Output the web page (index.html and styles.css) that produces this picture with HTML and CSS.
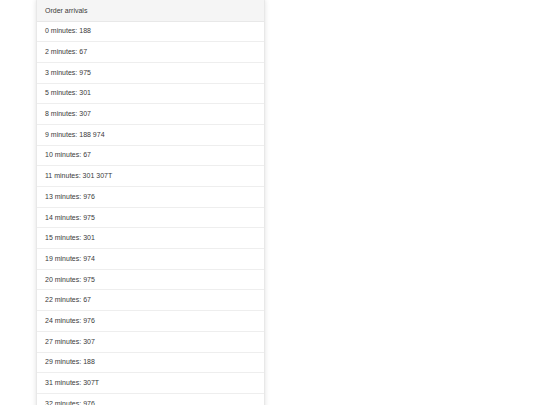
FILE: index.html
```html
<!DOCTYPE html>
<html lang="en">
<head>
  <meta charset="UTF-8">
  <title>Order arrivals</title>
  <link rel="stylesheet" href="styles.css">
</head>
<body>
  <div class="panel">
    <div class="panel-heading">Order arrivals</div>
    <ul class="list-group">
      <li>0 minutes: 188</li>
      <li>2 minutes: 67</li>
      <li>3 minutes: 975</li>
      <li>5 minutes: 301</li>
      <li>8 minutes: 307</li>
      <li>9 minutes: 188 974</li>
      <li>10 minutes: 67</li>
      <li>11 minutes: 301 307T</li>
      <li>13 minutes: 976</li>
      <li>14 minutes: 975</li>
      <li>15 minutes: 301</li>
      <li>19 minutes: 974</li>
      <li>20 minutes: 975</li>
      <li>22 minutes: 67</li>
      <li>24 minutes: 976</li>
      <li>27 minutes: 307</li>
      <li>29 minutes: 188</li>
      <li>31 minutes: 307T</li>
      <li>32 minutes: 976</li>
    </ul>
  </div>
</body>
</html>
```

FILE: styles.css
```css
body {
  margin: 0;
  font-family: "Liberation Sans", Arial, sans-serif;
  font-size: 7px;
  color: #3a3a3a;
  background: #fff;
}

.panel {
  width: 227px;
  margin: -1px 0 0 36px;
  border: 1px solid #e8e8e8;
  border-radius: 2px;
  box-shadow: 0 0 5px rgba(0, 0, 0, 0.12);
  background: #fff;
}

.panel-heading {
  background: #f5f5f5;
  padding: 5.5px 8px 5px;
  line-height: 10px;
  border-bottom: 1px solid #e8e8e8;
}

.list-group {
  list-style: none;
  margin: 0;
  padding: 0;
}

.list-group li {
  padding: 4.85px 8px;
  line-height: 10px;
  border-bottom: 1px solid #eee;
}
```
